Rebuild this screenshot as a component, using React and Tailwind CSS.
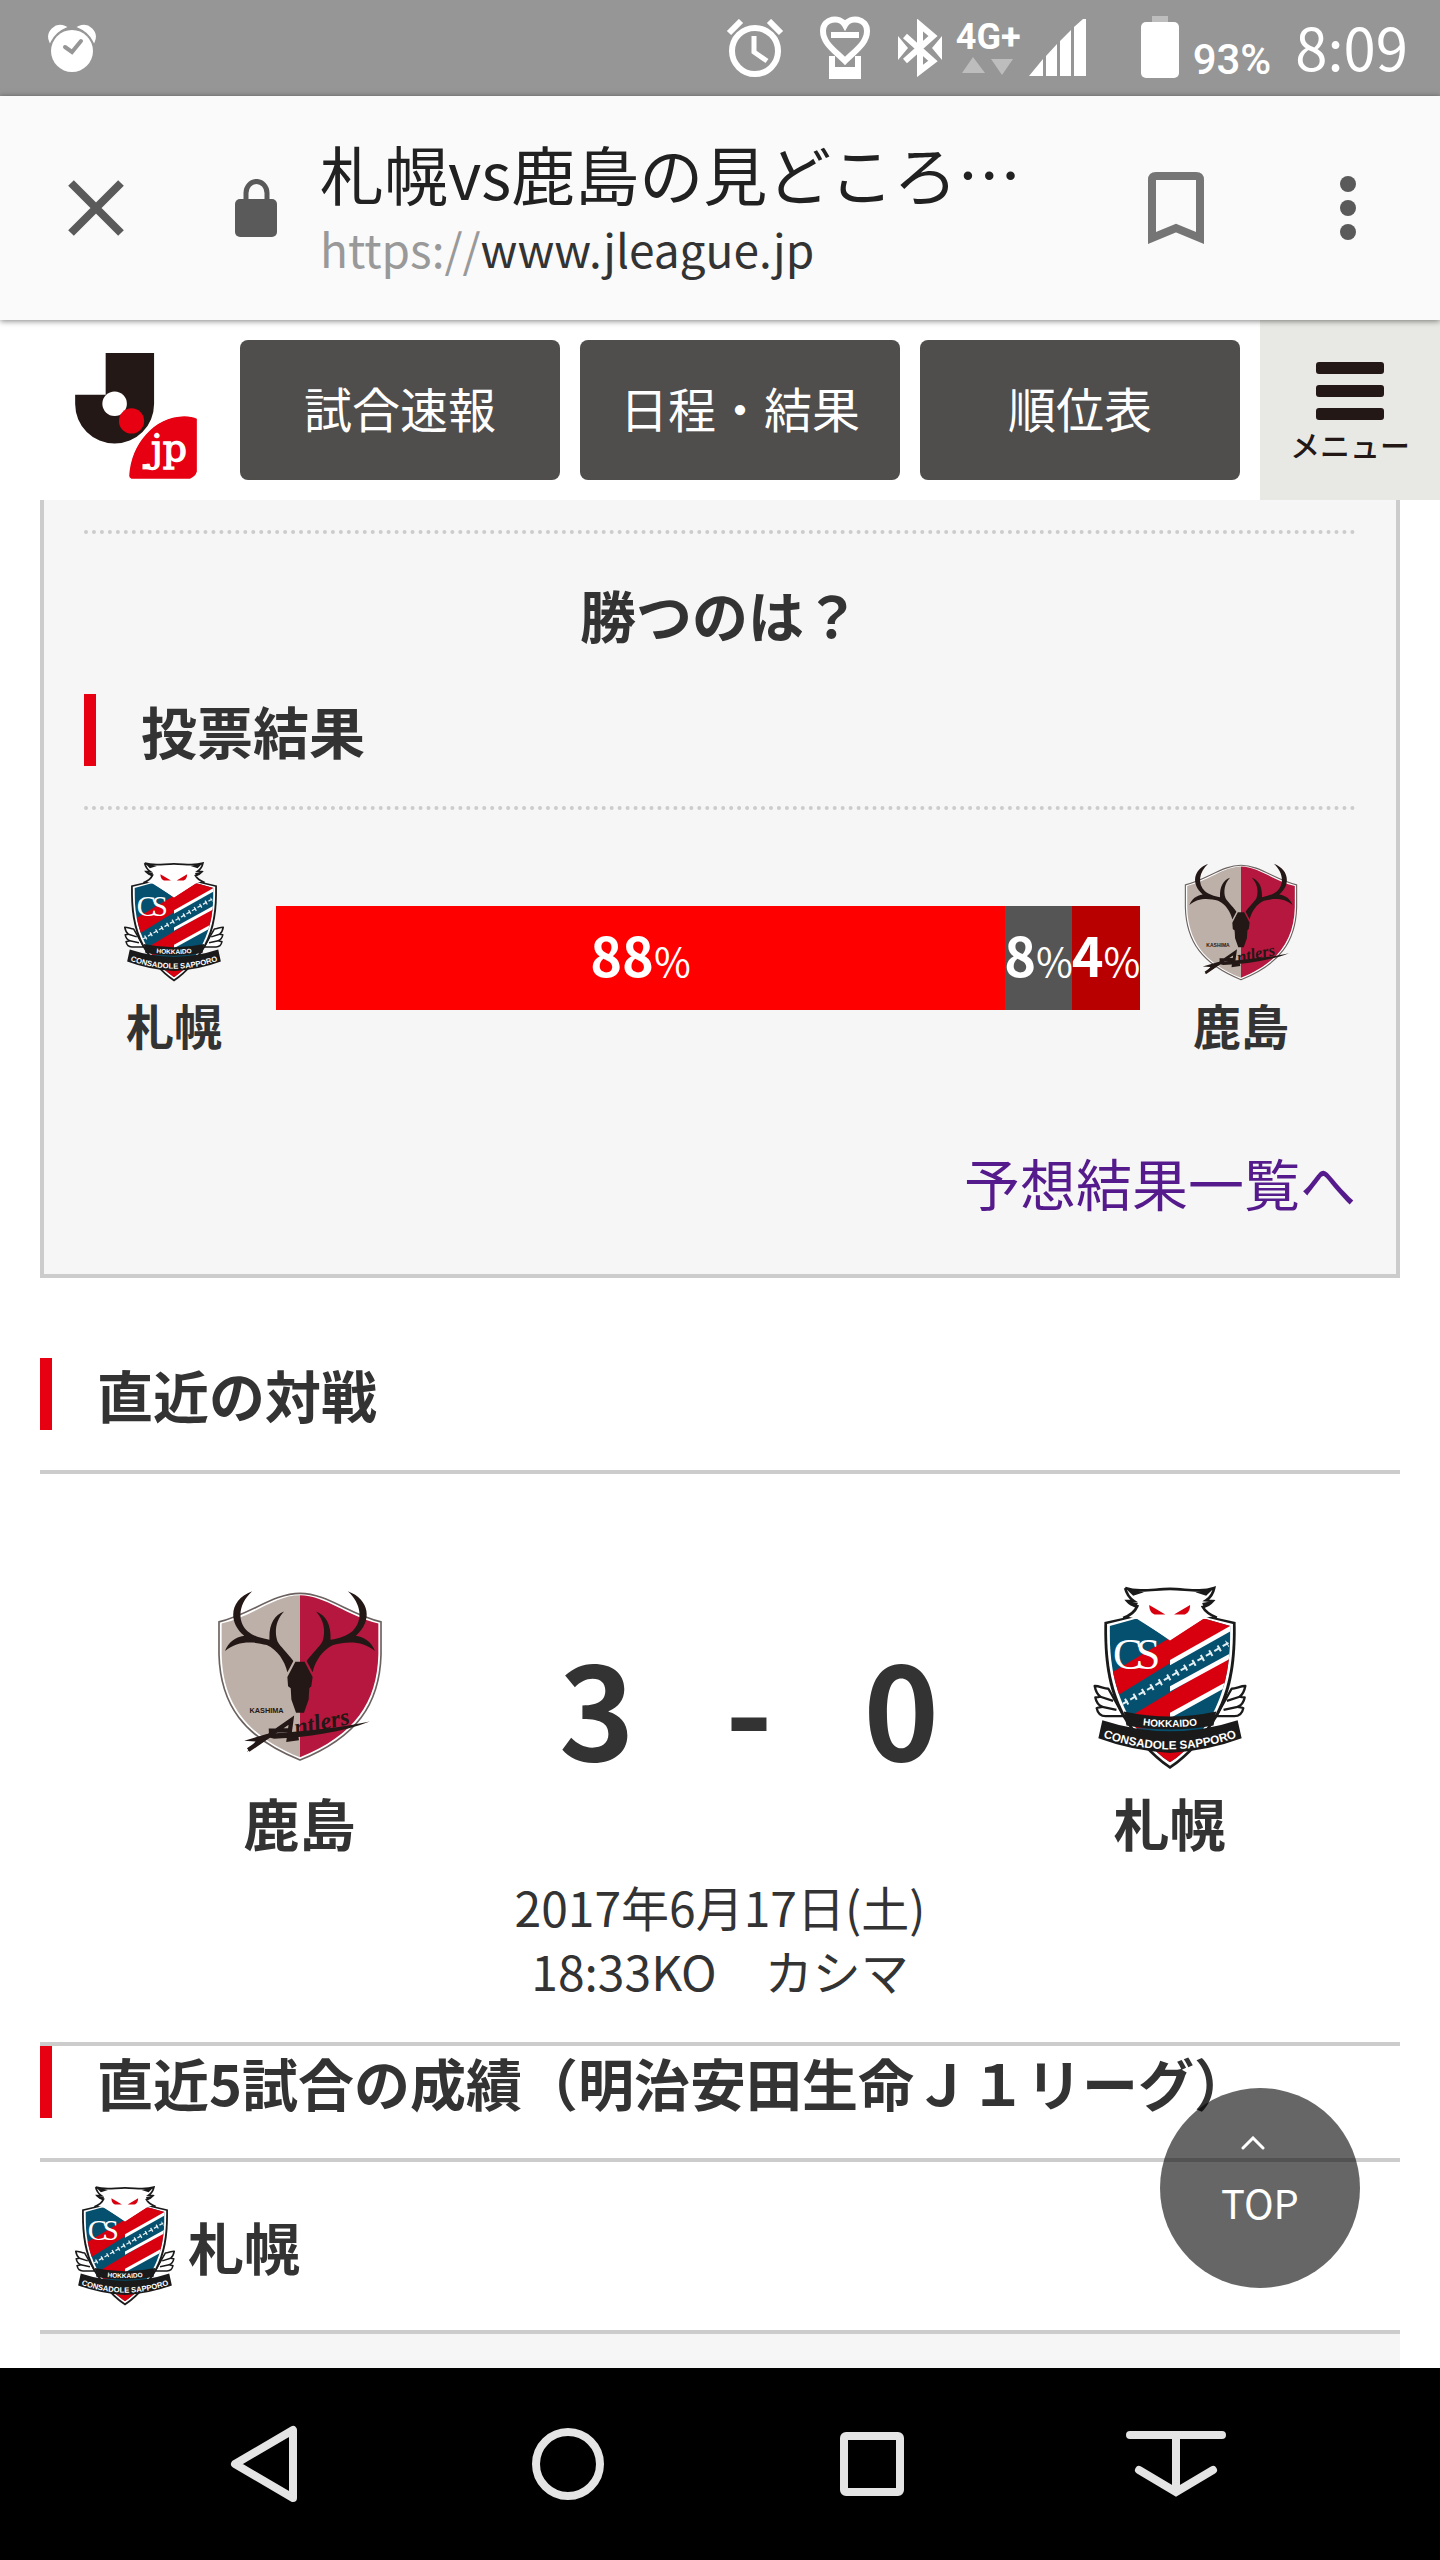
import React from "react";

function SapporoEmblem({ className, id }) {
  return (
    <svg viewBox="38 46 460 548" className={className} role="img" aria-label="札幌">
      {/* Wings */}
      <g fill="#fff" stroke="#1a1a1a" strokeWidth="7" strokeLinejoin="round">
        <path d="M84 352 C70 352 56 343 43 344 C46 360 52 370 60 376 C54 378 48 378 45 378 C48 394 56 402 66 406 C58 408 52 408 49 410 C52 426 60 434 76 434 H130 Z" />
        <path d="M452 352 C466 352 480 343 493 344 C490 360 484 370 476 376 C482 378 488 378 491 378 C488 394 480 402 470 406 C478 408 484 408 487 410 C484 426 476 434 460 434 H406 Z" />
        <path d="M60 376 L98 388 M66 406 L108 415 M476 376 L438 388 M470 406 L428 415" />
      </g>
      {/* Shield */}
      <path
        d="M72 153 L160 133 L268 120 L376 133 L464 153 C466 260 456 350 412 432 C370 500 330 550 268 592 C206 550 166 500 124 432 C80 350 70 260 72 153Z"
        fill="#1a1a1a"
      />
      <path
        d="M80 159 L165 138 H371 L456 159 C457 260 447 345 405 426 C365 495 325 543 268 582 C211 543 171 495 131 426 C89 345 79 260 80 159Z"
        fill="#fff"
      />
      <clipPath id={id}>
        <path d="M88 165 L166 143 H372 L448 165 C449 260 439 340 398 422 C360 490 322 535 268 572 C214 535 176 490 138 422 C97 340 87 260 88 165Z" />
      </clipPath>
      <g clipPath={`url(#${id})`}>
        <rect x="80" y="130" width="380" height="460" fill="#05506e" />
        <path d="M70 318 L460 85 V158 L70 398Z" fill="#d8000f" />
        <path d="M120 452 L460 248 V326 L268 436 V470 H130Z" fill="#d8000f" />
        <path d="M268 266 L460 158 V174 L268 282Z" fill="#fff" />
        <path d="M268 345 L460 240 V256 L268 360Z" fill="#fff" />
        <path d="M268 424 L460 318 V334 L268 440Z" fill="#fff" />
        {/* Stars along the blue band */}
        <path d="M136 392 L440 217" stroke="#e2eef2" strokeWidth="20" strokeDasharray="6 23" />
        <path d="M124 399 L446 213" stroke="#e2eef2" strokeWidth="6" strokeDasharray="20 9" />
        <path d="M170 140 L268 208 L372 140Z" fill="#fff" />
        <path d="M200 530 H340 V600 H200Z" fill="#d8000f" />
      </g>
      <text x="98" y="294" fontSize="132" className="font-['Liberation_Serif',serif]" fill="#fff">C</text>
      <text x="166" y="294" fontSize="132" className="font-['Liberation_Serif',serif]" fill="#fff">S</text>
      {/* Owl head */}
      <path
        d="M134 51 C180 66 220 54 268 54 C316 54 356 66 400 51 C396 72 388 80 376 88 L396 90 C386 102 376 106 366 108 C372 120 384 128 398 134 L366 144 L268 206 L170 144 L140 136 C156 128 166 118 170 106 C160 106 148 100 140 90 L160 90 C146 80 138 68 134 51Z"
        fill="#fff"
      />
      <path
        d="M134 51 C180 66 220 54 268 54 C316 54 356 66 400 51 C396 72 388 80 376 88 L396 90 C386 102 376 106 366 108 C372 120 384 130 408 140 M134 51 C138 68 146 80 160 90 L140 90 C148 100 160 104 170 106 C164 120 152 132 128 141"
        fill="none"
        stroke="#1a1a1a"
        strokeWidth="8"
      />
      <path d="M134 51 L190 64 L158 74Z M400 51 L344 64 L376 74Z M140 90 L172 96 L166 112Z M396 90 L364 96 L370 112Z" fill="#1a1a1a" />
      <path d="M206 102 L254 130 H222 C210 126 206 114 206 102Z M328 102 L280 130 H312 C324 126 328 114 328 102Z" fill="#d8000f" />
      {/* Ribbons */}
      <path d="M130 420 Q268 450 406 420 L398 462 Q268 486 138 462Z" fill="#1a1a1a" />
      <path id={`${id}-top`} d="M140 454 Q268 479 396 454" fill="none" />
      <text className="font-['Liberation_Sans',sans-serif] font-bold" fontSize="30" fill="#fff">
        <textPath href={`#${id}-top`} startOffset="50%" textAnchor="middle">HOKKAIDO</textPath>
      </text>
      <path d="M66 446 Q268 512 470 446 L482 500 Q380 538 268 544 Q156 538 54 500Z" fill="#1a1a1a" />
      <path id={`${id}-bottom`} d="M50 490 Q268 576 486 490" fill="none" />
      <text className="font-['Liberation_Sans_Narrow','Liberation_Sans',sans-serif] font-bold" fontSize="35" fill="#fff">
        <textPath href={`#${id}-bottom`} startOffset="50%" textAnchor="middle">CONSADOLE SAPPORO</textPath>
      </text>
    </svg>
  );
}

function KashimaEmblem({ className }) {
  return (
    <svg viewBox="50 56 500 518" className={className} role="img" aria-label="鹿島">
      <path
        d="M300 66 C220 66 150 130 56 152 V250 C60 400 130 500 300 568 C470 500 540 400 544 250 V152 C450 130 380 66 300 66Z"
        fill="#fff"
        stroke="#6b6260"
        strokeWidth="5"
      />
      <path d="M300 72 C225 72 155 136 64 157 V250 C68 395 135 492 300 560Z" fill="#bdb0a8" />
      <path d="M300 72 C375 72 445 136 536 157 V250 C532 395 465 492 300 560Z" fill="#b5173f" />
      {/* Antlers and skull */}
      <g fill="#231815">
        <path d="M156 60 C90 84 80 150 132 194 C104 198 84 214 74 240 C110 208 160 210 200 222 C232 236 254 270 262 304 L280 270 C262 244 240 226 232 210 C222 180 228 146 252 121 C222 132 206 160 208 206 C180 200 162 196 142 180 C108 148 116 96 156 60Z" />
        <path d="M444 60 C510 84 520 150 468 194 C496 198 516 214 526 240 C490 208 440 210 400 222 C368 236 346 270 338 304 L320 270 C338 244 360 226 368 210 C378 180 372 146 348 121 C378 132 394 160 392 206 C420 200 438 196 458 180 C492 148 484 96 444 60Z" />
        <path d="M286 272 H314 L338 318 L334 346 L328 352 L326 386 L312 426 H288 L274 386 L272 352 L264 346 L262 318Z" />
        <path d="M132 510 L200 490 C330 480 430 470 510 452 C430 484 320 500 222 504 L208 500 L140 544 L166 512Z" />
      </g>
      <path d="M144 538 L274 448 L266 506 L296 502 M206 480 L268 478" fill="none" stroke="#231815" strokeWidth="13" />
      <text x="148" y="426" fontSize="22" className="font-['Liberation_Sans',sans-serif] font-bold" fill="#231815">KASHIMA</text>
      <text
        x="288"
        y="494"
        fontSize="72"
        transform="rotate(-12 288 494)"
        className="font-['Liberation_Serif',serif] font-bold italic"
        fill="#231815"
      >
        ntlers
      </text>
    </svg>
  );
}

function JLeagueLogo() {
  return (
    <svg viewBox="40 64 376 386" className="h-32 w-[125px]" role="img" aria-label="J.LEAGUE.jp">
      <path d="M135 67 H281 V221 A119 119 0 0 1 43 221 V193 H135Z" fill="#231815" />
      <circle cx="162" cy="220" r="37" fill="#fff" />
      <circle cx="213" cy="272" r="38" fill="#e60012" />
      <path
        d="M204 437 C210 340 280 258 372 256 Q396 256 412 264 V425 Q408 440 390 448 H212 Q204 445 204 437Z"
        fill="#e60012"
        stroke="#fff"
        strokeWidth="4"
      />
      <rect x="246" y="402" width="16" height="16" fill="#fff" />
      <text x="272" y="393" fontSize="114" className="font-['DejaVu_Serif',serif]" fill="#fff" stroke="#fff" strokeWidth="4">jp</text>
    </svg>
  );
}

function StatusBar() {
  return (
    <div className="flex h-24 items-center bg-[#969696] pr-8 pl-[47px] text-white">
      <svg viewBox="0 0 50 48" className="h-12 w-[50px]" fill="#fff">
        <circle cx="25" cy="27" r="21" />
        <path d="M3 17 A11 11 0 0 1 18 3 Q8 7 3 17Z M47 17 A11 11 0 0 0 32 3 Q42 7 47 17Z" stroke="#fff" strokeWidth="2" />
        <path d="M18 23 L25 28 L34 17" fill="none" stroke="#969696" strokeWidth="4" strokeLinecap="round" />
      </svg>
      <svg viewBox="0 0 58 58" className="ml-auto h-[58px] w-[58px]" fill="none" stroke="#fff" strokeWidth="6">
        <circle cx="29" cy="32" r="23" />
        <path d="M3 14 L15 2 M55 14 L43 2" />
        <path d="M28 17 V33 L41 42" strokeWidth="5" />
      </svg>
      <svg viewBox="0 0 50 64" className="ml-9 h-16 w-[50px]" fill="none" stroke="#fff" strokeWidth="6">
        <path d="M12 40 V60 H38 V40" />
        <path d="M25 45 C14 34 3 27 3 15 C3 2 20 0 25 9 C30 0 47 2 47 15 C47 27 36 34 25 45Z" />
        <path d="M11 19 H39" />
        <path d="M9 51 H41 V62 H9Z" fill="#fff" stroke="none" />
      </svg>
      <svg viewBox="0 0 44 58" className="ml-7 h-[58px] w-11" fill="none" stroke="#fff" strokeWidth="6">
        <path d="M7 17 L35 42 L22 52 V6 L35 17 L7 42" />
        <path d="M0 17 L10 29 L0 41Z M44 17 L34 29 L44 41Z" fill="#fff" stroke="none" />
      </svg>
      <div className="ml-3.5 flex flex-col items-center">
        <span className="font-['Roboto',sans-serif] text-[36px] leading-9 font-bold">4G+</span>
        <svg viewBox="0 0 52 22" className="h-[22px] w-[52px]" fill="#bdbdbd">
          <path d="M0 18 L11 2 L23 18Z M29 4 H51 L40 20Z" />
        </svg>
      </div>
      <svg viewBox="0 0 58 58" className="ml-2 h-[58px] w-[58px]" fill="#fff">
        <path d="M0 57 L14 40 V57Z M17 37 L28 25 V57 H17Z M31 22 L42 11 V57 H31Z M45 8 L54 0 H57 V57 H45Z" />
      </svg>
      <svg viewBox="0 0 38 64" className="ml-[54px] h-16 w-[38px]" fill="#fff">
        <rect x="11" y="0" width="16" height="8" fill="#bdbdbd" />
        <rect y="6" width="38" height="56" rx="5" />
      </svg>
      <span className="ml-3.5 pt-6 font-['Roboto',sans-serif] text-[42px] leading-12 font-medium">93%</span>
      <span className="ml-6 pb-1 text-[58px] leading-16">8:09</span>
    </div>
  );
}

function BrowserBar() {
  return (
    <header className="relative z-10 flex h-56 items-center bg-[#fafafa] pr-[84px] pl-[68px] shadow-[0_1px_6px_rgba(0,0,0,0.5)]">
      <button type="button" aria-label="閉じる">
        <svg viewBox="0 0 56 56" className="size-14" stroke="#5a5a5a" strokeWidth="8">
          <path d="M3 3 L53 53 M53 3 L3 53" />
        </svg>
      </button>
      <svg viewBox="0 0 42 58" className="ml-[111px] h-[58px] w-[42px]" fill="#5a5a5a">
        <rect y="20" width="42" height="38" rx="5" />
        <path d="M11 22 V14 A10 11 0 0 1 32 14 V22" fill="none" stroke="#5a5a5a" strokeWidth="5" />
      </svg>
      <div className="ml-[43px] flex-1 pb-1 whitespace-nowrap">
        <h1 className="text-[64px] leading-20 text-[#212121]">札幌vs鹿島の見どころ…</h1>
        <p className="mt-1 text-[46px] leading-16 text-[#333]">
          <span className="text-[#999]">https://</span>www.jleague.jp
        </p>
      </div>
      <button type="button" aria-label="ブックマーク">
        <svg viewBox="0 0 56 72" className="h-[72px] w-14" fill="none" stroke="#757575" strokeWidth="8">
          <path d="M4 66 V8 Q4 4 8 4 H48 Q52 4 52 8 V66 L28 56Z" />
        </svg>
      </button>
      <button type="button" aria-label="その他" className="ml-[136px]">
        <svg viewBox="0 0 16 64" className="h-16 w-4" fill="#5a5a5a">
          <circle cx="8" cy="8" r="8" />
          <circle cx="8" cy="32" r="8" />
          <circle cx="8" cy="56" r="8" />
        </svg>
      </button>
    </header>
  );
}

const navLinks = ["試合速報", "日程・結果", "順位表"];

function SiteHeader() {
  return (
    <div className="flex h-[180px] bg-white pl-[74px]">
      <a href="#" className="flex items-center pt-3">
        <JLeagueLogo />
      </a>
      <nav className="ml-[41px] flex flex-1 gap-5 py-5 pr-5">
        {navLinks.map((label) => (
          <a
            key={label}
            href="#"
            className="flex flex-1 items-center justify-center rounded-lg bg-[#4f4e4c] pb-1.5 text-5xl text-white"
          >
            {label}
          </a>
        ))}
      </nav>
      <button type="button" className="flex w-[180px] flex-col items-center bg-[#e8e9e4] pt-[42px] text-[#231815]">
        <svg viewBox="0 0 68 58" className="h-[58px] w-[68px]" fill="#231815">
          <rect width="68" height="12" rx="3" />
          <rect y="23" width="68" height="12" rx="3" />
          <rect y="46" width="68" height="12" rx="3" />
        </svg>
        <span className="mt-1.5 text-[30px] leading-9 font-medium">メニュー</span>
      </button>
    </div>
  );
}

function SectionTitle({ dotted, children }) {
  return (
    <div className={`border-b-4 border-[#ccc] pb-10 ${dotted ? "border-dotted" : ""}`}>
      <h2 className="border-l-12 border-[#e60012] pl-[45px] text-[56px] leading-[72px] font-bold">{children}</h2>
    </div>
  );
}

const votes = [
  { value: 88, grow: 729, color: "bg-[#ff0000]" },
  { value: 8, grow: 67, color: "bg-[#555]" },
  { value: 4, grow: 68, color: "bg-[#b80000]" },
];

function VotePanel() {
  return (
    <section className="border-4 border-t-0 border-[#ccc] bg-[#f6f6f6] px-10 pt-[30px] pb-14">
      <div className="border-t-4 border-dotted border-[#ccc]" />
      <p className="my-11 text-center text-[56px] leading-[72px] font-bold">勝つのは？</p>
      <SectionTitle dotted>投票結果</SectionTitle>
      <div className="flex items-start pt-[52px] pr-3.5">
        <div className="flex w-[180px] flex-col items-center">
          <SapporoEmblem id="sapporo-vote" className="h-30 w-[102px]" />
          <span className="mt-2.5 text-5xl leading-16 font-bold">札幌</span>
        </div>
        <div className="mt-11 ml-3 flex h-26 flex-1 text-white">
          {votes.map((vote) => (
            <div
              key={vote.value}
              className={`flex min-w-0 basis-0 items-baseline justify-center leading-24 ${vote.color}`}
              style={{ flexGrow: vote.grow }}
            >
              <span className="text-[54px] font-bold">{vote.value}</span>
              <span className="text-[40px]">%</span>
            </div>
          ))}
        </div>
        <div className="flex w-[202px] flex-col items-center">
          <KashimaEmblem className="h-30 w-[114px]" />
          <span className="mt-2.5 text-5xl leading-16 font-bold">鹿島</span>
        </div>
      </div>
      <p className="mt-[90px] text-right text-[56px] leading-[72px]">
        <a href="#" className="text-[#551a8b]">予想結果一覧へ</a>
      </p>
    </section>
  );
}

function RecentMatch() {
  return (
    <section className="mt-20">
      <SectionTitle>直近の対戦</SectionTitle>
      <div className="border-b-4 border-[#ccc] pt-28 pb-10 text-center">
        <div className="grid grid-cols-[519fr_380fr_461fr]">
          <div className="flex flex-col items-center">
            <KashimaEmblem className="h-[180px] w-[166px]" />
            <span className="mt-4 text-[56px] leading-20 font-bold">鹿島</span>
          </div>
          <div className="mt-14 flex items-start justify-between text-[128px] leading-[128px] font-bold">
            <span>3</span>
            <span>-</span>
            <span>0</span>
          </div>
          <div className="flex flex-col items-center">
            <SapporoEmblem id="sapporo-match" className="h-[184px] w-[154px]" />
            <span className="mt-3 text-[56px] leading-20 font-bold">札幌</span>
          </div>
        </div>
        <p className="mt-3 text-5xl leading-16">
          2017年6月17日(土)
          <br />
          18:33KO　カシマ
        </p>
      </div>
    </section>
  );
}

function RecentForm() {
  return (
    <section className="flex flex-1 flex-col">
      <SectionTitle>直近5試合の成績（明治安田生命Ｊ１リーグ）</SectionTitle>
      <div className="flex items-center gap-3 border-b-4 border-[#ccc] py-6 pl-[34px]">
        <SapporoEmblem id="sapporo-form" className="h-30 w-[102px]" />
        <h3 className="text-[56px] leading-[72px] font-bold">札幌</h3>
      </div>
      <div className="min-h-8 flex-1 bg-[#f6f6f6]" />
    </section>
  );
}

function AndroidNav() {
  return (
    <nav className="grid h-48 grid-cols-4 place-items-center bg-black px-28">
      <button type="button" aria-label="戻る">
        <svg viewBox="0 0 68 78" className="h-[78px] w-[68px]" fill="none" stroke="#e4e4e4" strokeWidth="8" strokeLinejoin="round">
          <path d="M63 5 V73 L5 39Z" />
        </svg>
      </button>
      <button type="button" aria-label="ホーム">
        <svg viewBox="0 0 72 72" className="size-18" fill="none" stroke="#e4e4e4" strokeWidth="8">
          <circle cx="36" cy="36" r="32" />
        </svg>
      </button>
      <button type="button" aria-label="アプリ履歴">
        <svg viewBox="0 0 64 64" className="size-16" fill="none" stroke="#e4e4e4" strokeWidth="8">
          <rect x="4" y="4" width="56" height="56" rx="2" />
        </svg>
      </button>
      <button type="button" aria-label="通知パネル">
        <svg viewBox="0 0 100 68" className="h-[68px] w-[100px]" fill="none" stroke="#e4e4e4" strokeWidth="8" strokeLinecap="round">
          <path d="M4 5 H96 M50 5 V60 M13 40 L50 62 L87 40" />
        </svg>
      </button>
    </nav>
  );
}

export default function App() {
  return (
    <div
      lang="ja"
      className="flex min-h-screen flex-col bg-white font-['Noto_Sans_CJK_JP',sans-serif] text-[#333]"
    >
      <StatusBar />
      <BrowserBar />
      <SiteHeader />
      <main className="relative flex flex-1 flex-col px-10">
        <VotePanel />
        <RecentMatch />
        <RecentForm />
        <a
          href="#"
          className="absolute right-20 bottom-20 flex size-50 flex-col items-center rounded-full bg-black/60 pt-12 text-white"
        >
          <svg viewBox="0 0 24 14" className="mr-3.5 h-3.5 w-6" fill="none" stroke="#fff" strokeWidth="3" strokeLinecap="round">
            <path d="M2 12 L12 2 L22 12" />
          </svg>
          <span className="mt-6 text-[40px] leading-14">TOP</span>
        </a>
      </main>
      <AndroidNav />
    </div>
  );
}
